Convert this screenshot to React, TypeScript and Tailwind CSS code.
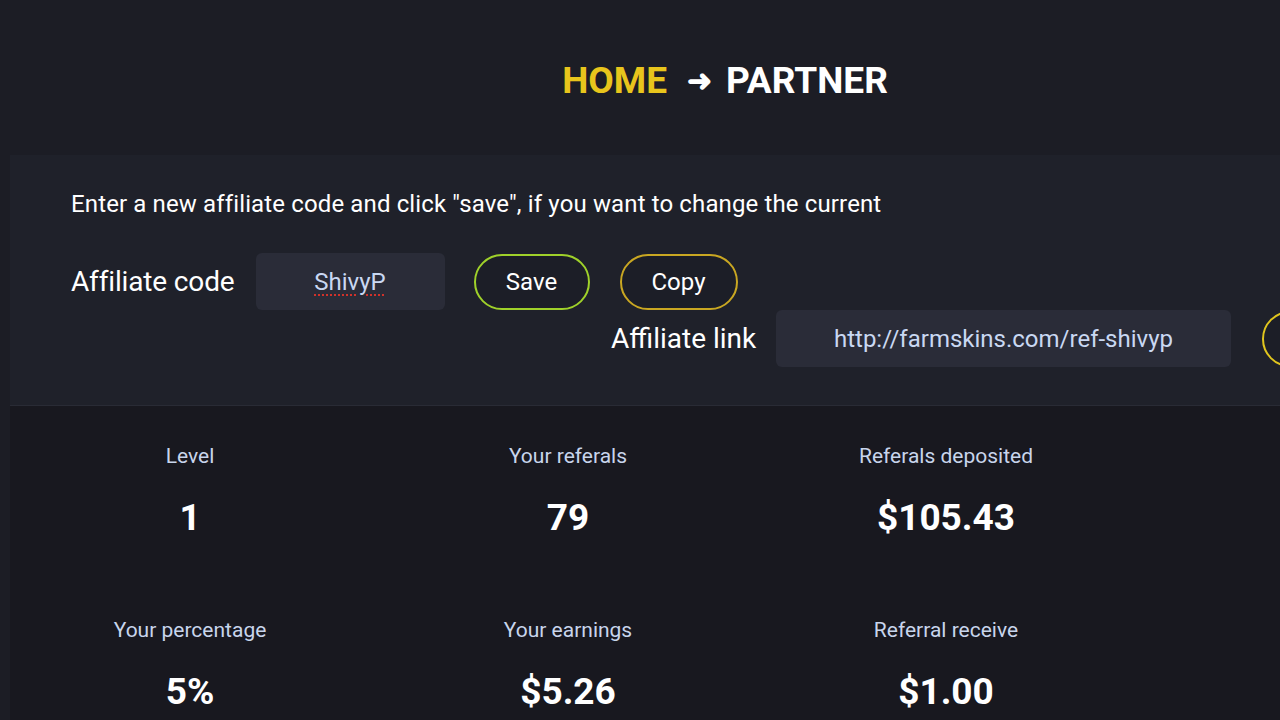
import React from "react";

const stats = [
  { label: "Level", value: "1" },
  { label: "Your referals", value: "79" },
  { label: "Referals deposited", value: "$105.43" },
  { label: "Your percentage", value: "5%" },
  { label: "Your earnings", value: "$5.26" },
  { label: "Referral receive", value: "$1.00" },
];

export default function App() {
  const pill =
    "flex h-[56px] items-center justify-center rounded-full border-2 bg-[#1c1e27] text-[24px] text-white";

  return (
    <div
      className="flex h-[720px] w-[1280px] flex-col overflow-hidden bg-[#1c1d25]"
      style={{ fontFamily: "Roboto, 'Liberation Sans', sans-serif" }}
    >
      {/* Breadcrumb */}
      <div className="flex h-[155px] items-start justify-center pl-[170px] pt-[59px]">
        <span className="text-[37px] font-bold leading-[44px] text-[#e8c51c]">HOME</span>
        <span className="ml-[20px] mr-[14px] text-[30px] font-bold leading-[44px] text-white">➜</span>
        <span className="text-[37px] font-bold leading-[44px] text-white">PARTNER</span>
      </div>

      {/* Affiliate settings */}
      <div className="ml-[10px] h-[251px] shrink-0 border-b border-[#292b35] bg-[#1f212a] pl-[61px] pt-[33px]">
        <p className="text-[24px] leading-[32px] tracking-[0.13px] text-white">
          Enter a new affiliate code and click "save", if you want to change the current
        </p>

        <div className="mt-[33px] flex items-center">
          <span className="text-[28px] tracking-[-0.15px] text-white">Affiliate code</span>
          <div className="ml-[21px] flex h-[57px] w-[189px] items-center justify-center rounded-md bg-[#2a2c38]">
            <span className="text-[24px] text-[#c9d8f2] underline decoration-[#d0322b] decoration-dotted decoration-2 underline-offset-[5px]">
              ShivyP
            </span>
          </div>
          <button className={`${pill} ml-[29px] w-[116px] border-[#9fd12a]`}>Save</button>
          <button className={`${pill} ml-[30px] w-[118px] border-[#c9a722]`}>Copy</button>
        </div>

        <div className="ml-[540px] flex items-center">
          <span className="w-[165px] shrink-0 text-[28px] text-white">Affiliate link</span>
          <div className="flex h-[57px] w-[455px] shrink-0 items-center justify-center rounded-md bg-[#2a2c38]">
            <span className="text-[24px] text-[#c9d8f2]">http://farmskins.com/ref-shivyp</span>
          </div>
          {/* second copy button runs past the right edge of the viewport */}
          <button
            aria-label="Copy"
            className={`${pill} ml-[31px] w-[118px] shrink-0 border-[#e0c51e]`}
          />
        </div>
      </div>

      {/* Stats */}
      <div className="ml-[10px] flex-1 bg-[#18181f]">
        <div className="grid grid-cols-[repeat(3,360px)] gap-x-[18px] gap-y-[81px] pt-[38px]">
          {stats.map((s) => (
            <div key={s.label} className="flex flex-col items-center">
              <span className="text-[21px] leading-[24px] text-[#c8d5ec]">{s.label}</span>
              <span className="mt-[31px] text-[37px] font-bold leading-[38px] text-white">
                {s.value}
              </span>
            </div>
          ))}
        </div>
      </div>
    </div>
  );
}
